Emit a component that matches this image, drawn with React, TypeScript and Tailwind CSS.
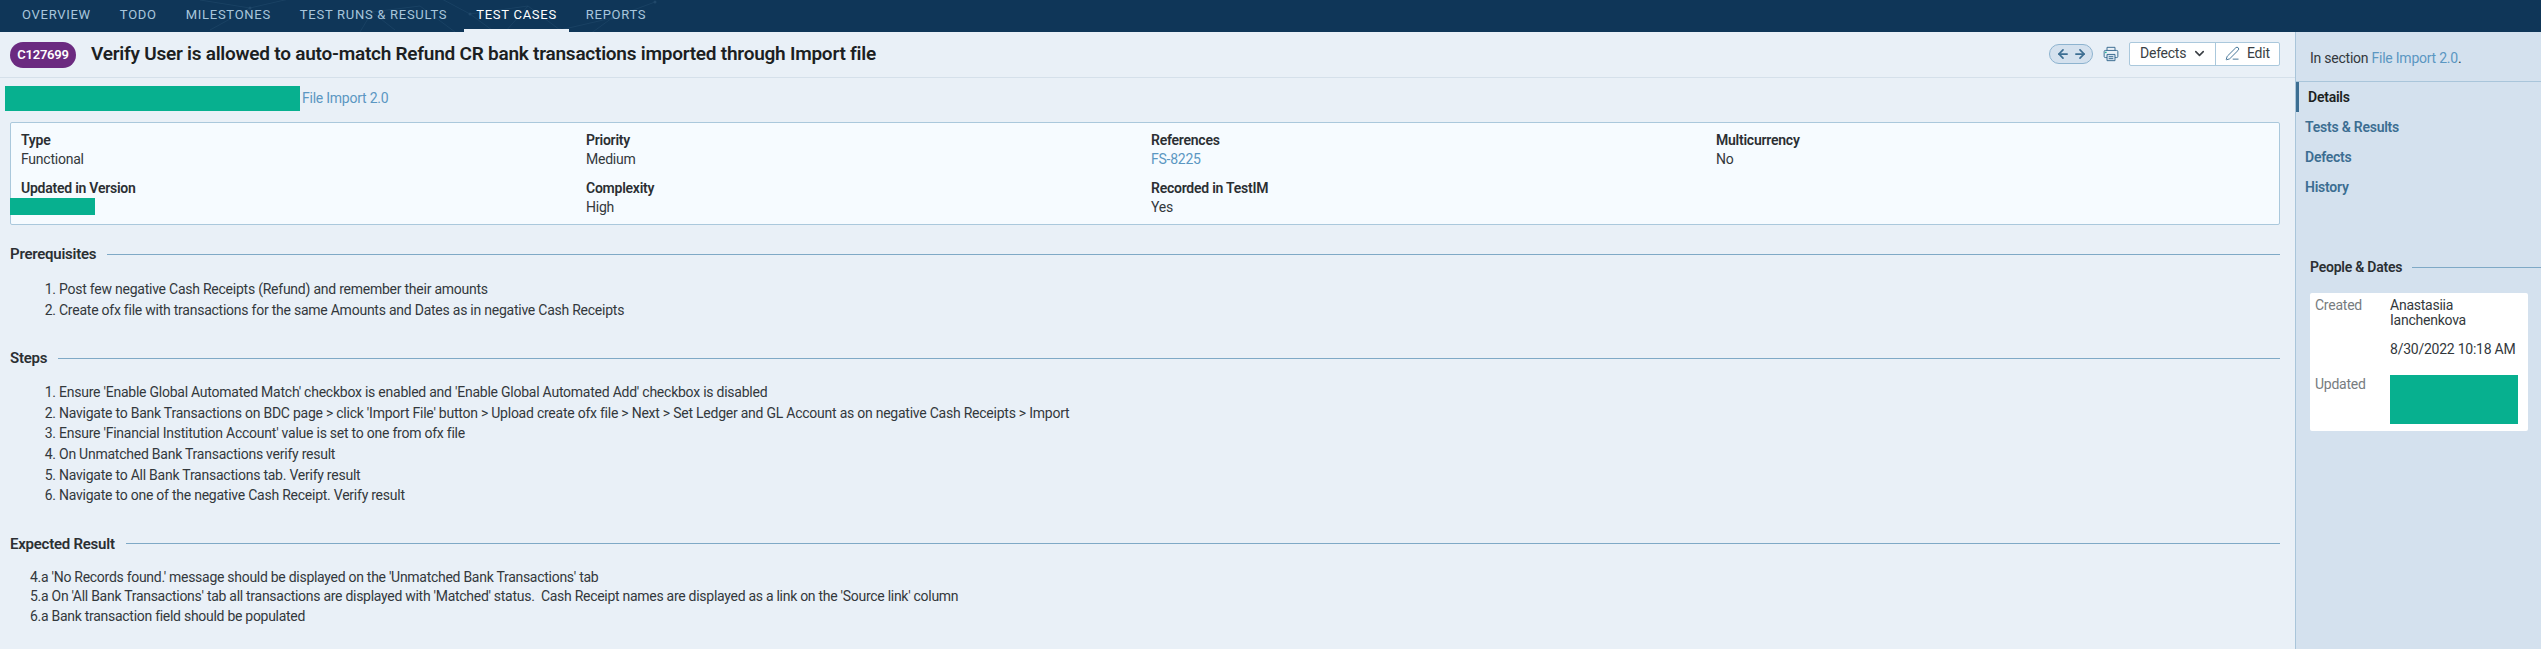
import React from 'react';
import { ArrowLeft, ArrowRight, ChevronDown, PenLine } from 'lucide-react';

const tabs = ['Overview', 'Todo', 'Milestones', 'Test Runs & Results', 'Test Cases', 'Reports'];

const prerequisites = [
  'Post few negative Cash Receipts (Refund) and remember their amounts',
  'Create ofx file with transactions for the same Amounts and Dates as in negative Cash Receipts',
];

const steps = [
  "Ensure 'Enable Global Automated Match' checkbox is enabled and 'Enable Global Automated Add' checkbox is disabled",
  "Navigate to Bank Transactions on BDC page > click 'Import File' button > Upload create ofx file > Next > Set Ledger and GL Account as on negative Cash Receipts > Import",
  "Ensure 'Financial Institution Account' value is set to one from ofx file",
  'On Unmatched Bank Transactions verify result',
  'Navigate to All Bank Transactions tab. Verify result',
  'Navigate to one of the negative Cash Receipt. Verify result',
];

const expected = [
  "4.a 'No Records found.' message should be displayed on the 'Unmatched Bank Transactions' tab",
  "5.a On 'All Bank Transactions' tab all transactions are displayed with 'Matched' status.  Cash Receipt names are displayed as a link on the 'Source link' column",
  '6.a Bank transaction field should be populated',
];

// faint network drawing behind the tabs
const NavPattern = () => (
  <svg className="absolute inset-0 pointer-events-none" width="2541" height="32" fill="none" stroke="#2c5577" strokeWidth="0.6" opacity="0.6">
    <path d="M200 0 L250 8 L302 -4 M250 8 L210 30 M360 32 L372 12 L420 6 L455 32 M372 12 L395 30 M470 14 L528 6 L560 30 L612 18 L655 2 M528 6 L505 32 M612 18 L590 34 M440 -2 L470 14 L492 30" />
    <g fill="#2c5577" stroke="none">
      <circle cx="250" cy="8" r="1.5" />
      <circle cx="372" cy="12" r="1.5" />
      <circle cx="470" cy="14" r="1.5" />
      <circle cx="560" cy="30" r="1.5" />
      <circle cx="612" cy="18" r="1.5" />
      <circle cx="655" cy="2" r="1.5" />
    </g>
  </svg>
);

const PrintIcon = () => (
  <svg className="ml-[10px] text-[#3c6e92]" width="16" height="16" viewBox="0 0 18 18" fill="none" stroke="currentColor" strokeWidth="1.1">
    <path d="M4.5 5V1.5h9V5" />
    <path d="M4.5 13H2.5a1.2 1.2 0 0 1-1.2-1.2V6.2A1.2 1.2 0 0 1 2.5 5h13a1.2 1.2 0 0 1 1.2 1.2v5.6a1.2 1.2 0 0 1-1.2 1.2h-2" />
    <path d="M4.5 9.5h9v7h-9z" fill="#d4e1ee" />
    <path d="M6.5 12h5M6.5 14.2h5" />
    <circle cx="3.2" cy="7.2" r="0.9" fill="#07b08f" stroke="none" />
  </svg>
);

const Field: React.FC<{ label: string; value?: string; link?: boolean }> = ({ label, value, link }) => (
  <div className="h-[48px] leading-[19px]">
    <div className="font-semibold text-[#2b2f33]">{label}</div>
    {value && <div className={link ? 'text-[#5b97c2]' : 'text-[#33383c]'}>{value}</div>}
  </div>
);

const Section: React.FC<{ title: string; className?: string; children: React.ReactNode }> = ({ title, className, children }) => (
  <section className={className}>
    <div className="flex items-center gap-[11px] h-[20px]">
      <h3 className="font-semibold text-[15px] text-[#2b2f33]">{title}</h3>
      <div className="flex-1 h-px bg-[#7fa9c6]" />
    </div>
    {children}
  </section>
);

export default function App() {
  return (
    <div className="h-[649px] w-[2541px] overflow-hidden bg-[#e9f0f7] text-[14px] text-[#33383c] font-['Roboto',sans-serif] tracking-[-0.24px]">
      <nav className="relative h-[32px] bg-[#0f3658] pl-[10px] flex gap-[5px] overflow-hidden">
        <NavPattern />
        {tabs.map((t) => (
          <a
            key={t}
            className={`relative h-[32px] px-[12px] flex items-center uppercase text-[13px] tracking-[0.72px] border-b-[3px] ${
              t === 'Test Cases' ? 'text-white border-[#e9f0f7]' : 'text-[#a8c6dc] border-transparent'
            }`}
          >
            {t}
          </a>
        ))}
      </nav>

      <div className="flex h-[617px]">
        <main className="w-[2295px] shrink-0">
          <header className="h-[46px] border-b border-[#d5e0ea] flex items-center pl-[10px] pr-[15px]">
            <span className="w-[66px] h-[26px] rounded-full bg-[#6b2a80] text-white text-[13px] font-semibold flex items-center justify-center">C127699</span>
            <h1 className="ml-[15px] text-[19px] font-semibold text-[#1c1f22]">Verify User is allowed to auto-match Refund CR bank transactions imported through Import file</h1>
            <div className="ml-auto -mt-[2px] flex items-center">
              <div className="w-[44px] h-[20px] rounded-full border border-[#8db3cf] bg-[#d4e1ee] flex items-center justify-center gap-[3px] text-[#3c6e92]">
                <ArrowLeft size={14} strokeWidth={3} />
                <ArrowRight size={14} strokeWidth={3} />
              </div>
              <PrintIcon />
              <div className="ml-[10px] h-[24px] flex items-center bg-white border border-[#aac8dc] rounded-[2px] text-[#3a3f44]">
                <span className="h-full w-[86px] pl-[10px] flex items-center gap-[6px] border-r border-[#aac8dc]">
                  Defects <ChevronDown size={15} strokeWidth={2.5} />
                </span>
                <span className="h-full w-[63px] pl-[9px] flex items-center gap-[7px]">
                  <PenLine size={15} strokeWidth={1.5} className="text-[#3c6e92]" /> Edit
                </span>
              </div>
            </div>
          </header>

          <div className="pt-[7px] pl-[5px] flex items-center h-[33px]">
            <div className="w-[295px] h-[25px] bg-[#07b08f]" />
            <span className="ml-[2px] text-[#5b97c2]">File Import 2.0</span>
          </div>

          <div className="ml-[10px] mr-[15px] mt-[11px] h-[103px] bg-[#f6fbff] border border-[#aac8dc] rounded-[2px] grid grid-cols-[repeat(4,565px)] pl-[10px] pt-[8px]">
            <Field label="Type" value="Functional" />
            <Field label="Priority" value="Medium" />
            <Field label="References" value="FS-8225" link />
            <Field label="Multicurrency" value="No" />
            <div className="relative h-[48px] leading-[19px]">
              <div className="font-semibold text-[#2b2f33]">Updated in Version</div>
              <div className="absolute left-[-11px] top-[19px] w-[85px] h-[17px] bg-[#07b08f]" />
            </div>
            <Field label="Complexity" value="High" />
            <Field label="Recorded in TestIM" value="Yes" />
          </div>

          <div className="pl-[10px] pr-[15px]">
            <Section title="Prerequisites" className="mt-[19px]">
              <ol className="mt-[15px] ml-[34px] list-decimal leading-[20.6px] pl-[15px]">
                {prerequisites.map((p) => <li key={p}>{p}</li>)}
              </ol>
            </Section>
            <Section title="Steps" className="mt-[28px]">
              <ol className="mt-[14px] ml-[34px] list-decimal leading-[20.6px] pl-[15px]">
                {steps.map((p) => <li key={p}>{p}</li>)}
              </ol>
            </Section>
            <Section title="Expected Result" className="mt-[28px]">
              <div className="mt-[14px] ml-[20px] leading-[19.6px] whitespace-pre-wrap tracking-[-0.28px]">
                {expected.map((p) => <div key={p}>{p}</div>)}
              </div>
            </Section>
          </div>
        </main>

        <aside className="flex-1 bg-[#d4e1ee] border-l border-[#a9c5da]">
          <div className="h-[50px] border-b border-[#a9c5da] pl-[14px] pt-[16px] leading-[20px]">
            In section <span className="text-[#5b97c2]">File Import 2.0</span>.
          </div>
          <ul className="font-semibold text-[#3c6e92]">
            <li className="h-[30px] flex items-center pl-[9px] border-l-[3px] border-[#3c6e92] text-[#1c1f22]">Details</li>
            <li className="h-[30px] flex items-center pl-[9px]">Tests &amp; Results</li>
            <li className="h-[30px] flex items-center pl-[9px]">Defects</li>
            <li className="h-[30px] flex items-center pl-[9px]">History</li>
          </ul>
          <div className="mt-[55px] pl-[14px]">
            <div className="flex items-center gap-[10px] h-[20px]">
              <h3 className="font-semibold text-[#2b2f33]">People &amp; Dates</h3>
              <div className="flex-1 h-px bg-[#7fa9c6]" />
            </div>
            <div className="mt-[16px] w-[218px] h-[138px] bg-white rounded-[2px] pl-[5px] pt-[5px] leading-[15px] grid grid-cols-[75px_1fr] text-[#33383c]">
              <span className="text-[#777c80]">Created</span>
              <div>
                <div>Anastasiia</div>
                <div>Ianchenkova</div>
                <div className="mt-[14px]">8/30/2022 10:18 AM</div>
              </div>
              <span className="text-[#777c80] mt-[12px]">Updated</span>
              <div className="mt-[10px] w-[128px] h-[49px] bg-[#07b08f]" />
            </div>
          </div>
        </aside>
      </div>
    </div>
  );
}
